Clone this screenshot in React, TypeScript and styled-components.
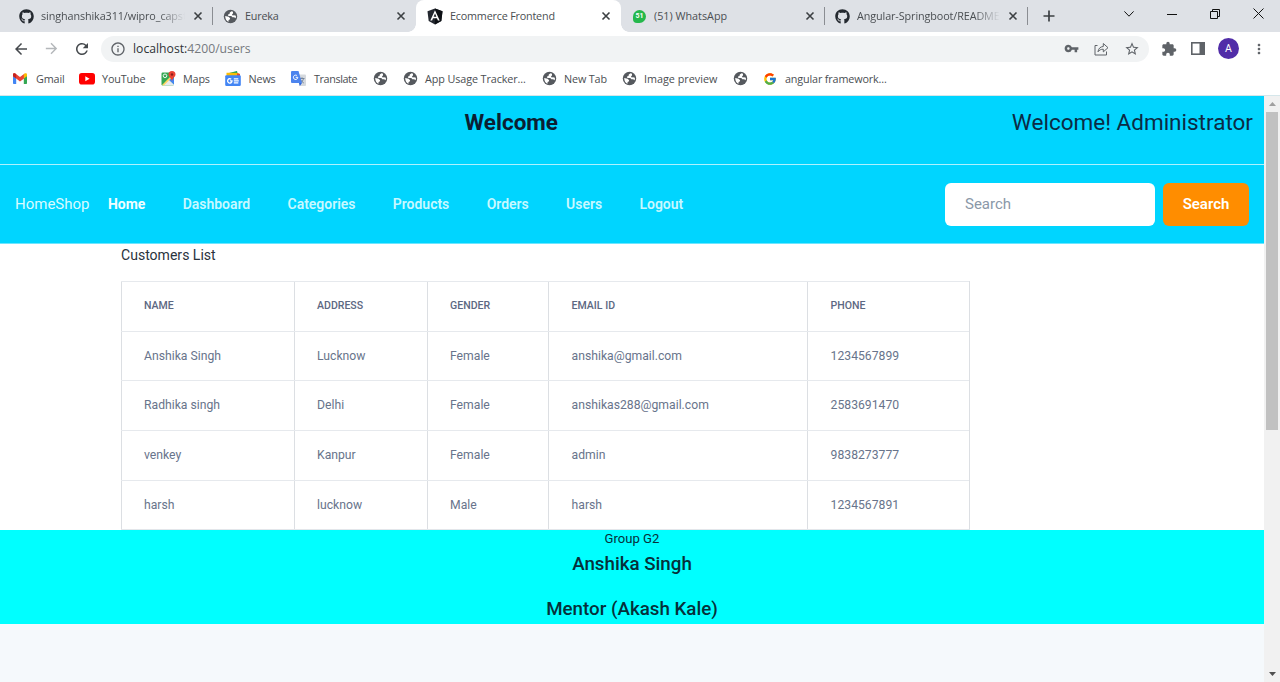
import React from "react";
import styled, { createGlobalStyle } from "styled-components";
import { MdArrowBack, MdArrowForward, MdRefresh, MdInfoOutline, MdVpnKey, MdStarBorder, MdExtension, MdMoreVert } from "react-icons/md";
import { FaGithub } from "react-icons/fa";
import { FcGoogle } from "react-icons/fc";

const Global = createGlobalStyle`
  * { box-sizing: border-box; }
  body { margin: 0; overflow: hidden; font-family: Roboto, sans-serif; }
`;

const Browser = styled.div`
  width: 1280px;
  height: 682px;
  display: flex;
  flex-direction: column;
  background: #fff;
  color: #4a4e52;
  svg { display: block; flex: none; }
`;

const TabStrip = styled.div`
  height: 32px;
  flex: none;
  display: flex;
  background: #dee1e6;
  font: 10.8px/16px "Open Sans", sans-serif;
  letter-spacing: -0.2px;
`;

const Tab = styled.div<{ $w: number; $pad: number; $active?: boolean; $divider?: boolean }>`
  position: relative;
  width: ${(p) => p.$w}px;
  padding: 0 9px 0 ${(p) => p.$pad}px;
  display: flex;
  align-items: center;
  gap: 7px;
  background: ${(p) => (p.$active ? "#fff" : "transparent")};
  border-radius: 8px 8px 0 0;
  ${(p) =>
    p.$active &&
    `&::before, &::after {
      content: ""; position: absolute; bottom: 0; width: 8px; height: 8px;
    }
    &::before { left: -8px; background: radial-gradient(circle at 0 0, transparent 7.5px, #fff 8px); }
    &::after { right: -8px; background: radial-gradient(circle at 100% 0, transparent 7.5px, #fff 8px); }`}
  ${(p) =>
    p.$divider &&
    `&::after {
      content: ""; position: absolute; right: 0; top: 7px; width: 1px; height: 18px; background: #8a8d92;
    }`}
`;

const TabTitle = styled.span<{ $fade?: boolean; $ls?: number }>`
  flex: 1;
  min-width: 0;
  overflow: hidden;
  white-space: nowrap;
  letter-spacing: ${(p) => p.$ls ?? -0.2}px;
  ${(p) => p.$fade && `mask-image: linear-gradient(to right, #000 82%, transparent);`}
`;

const NewTab = styled.div`
  width: 42px;
  display: flex;
  align-items: center;
  justify-content: center;
`;

const WindowButtons = styled.div`
  flex: 1;
  height: 27px;
  display: flex;
  align-items: center;
  justify-content: flex-end;
  gap: 33px;
  padding-right: 16px;
  color: #111;
`;

const Toolbar = styled.div`
  height: 33px;
  flex: none;
  display: flex;
  align-items: center;
  padding: 0 12px 0 12px;
  color: #5f6368;
`;

const NavButtons = styled.div`
  width: 89px;
  display: flex;
  align-items: center;
  gap: 13px;
`;

const Omnibox = styled.div`
  width: 1048px;
  height: 26px;
  padding: 0 9px;
  border-radius: 13px;
  background: #f1f3f4;
  display: flex;
  align-items: center;
`;

const Url = styled.span`
  flex: 1;
  padding: 1px 0 0 7px;
  font: 12.2px/18px "Open Sans", sans-serif;
  color: #75797e;
  b { font-weight: 400; color: #303337; }
`;

const OmniActions = styled.div`
  display: flex;
  align-items: center;
  gap: 15px;
`;

const ToolbarActions = styled.div`
  flex: 1;
  display: flex;
  align-items: center;
  gap: 14px;
  padding-left: 12px;
`;

const Avatar = styled.div`
  width: 21px;
  height: 21px;
  margin: 0 -2px 0 -1px;
  border-radius: 50%;
  background: #512da8;
  color: #fff;
  font-size: 10.5px;
  line-height: 21px;
  text-align: center;
`;

const Bookmarks = styled.div`
  height: 31px;
  flex: none;
  padding: 0 0 3px 13px;
  display: flex;
  align-items: center;
  border-bottom: 1px solid #d5e6ea;
  font: 10.8px/16px "Open Sans", sans-serif;
`;

const Bookmark = styled.div<{ $w: number; $ls?: number; $gap?: number }>`
  width: ${(p) => p.$w}px;
  display: flex;
  align-items: center;
  gap: ${(p) => p.$gap ?? 8}px;
  white-space: nowrap;
  letter-spacing: ${(p) => p.$ls ?? -0.15}px;
`;

const Viewport = styled.div`
  flex: 1;
  display: flex;
  min-height: 0;
`;

const Page = styled.main`
  width: 1264px;
  background: #f5f9fc;
  display: flex;
  flex-direction: column;
`;

const Header = styled.header`
  height: 69px;
  flex: none;
  display: grid;
  grid-template-columns: 1fr 1fr;
  background: #00d5ff;
  border-bottom: 1px solid #aef1ff;
`;

const Welcome = styled.h1`
  margin: 0;
  font: 700 22.5px/26px Roboto, sans-serif;
  text-align: right;
  padding: 13px 74px 0 0;
  color: #0b1f33;
`;

const Greeting = styled.div`
  font: 400 22.5px/26px Roboto, sans-serif;
  text-align: right;
  padding: 13px 11px 0 0;
  color: #0b2b45;
`;

const NavBar = styled.nav`
  height: 79px;
  flex: none;
  display: flex;
  align-items: center;
  background: #00d5ff;
  border-bottom: 1px solid #6de6ff;
  padding: 0 15px;
`;

const Brand = styled.span`
  width: 93px;
  font-size: 15px;
  line-height: 18px;
  color: #d9fbff;
`;

const Links = styled.div`
  flex: 1;
  display: flex;
  gap: 37.4px;
  font: 500 13.95px/18px Roboto, sans-serif;
`;

const NavLink = styled.a<{ $active?: boolean }>`
  font-weight: ${(p) => (p.$active ? 700 : 600)};
  color: ${(p) => (p.$active ? "#f2feff" : "#c8f8ff")};
`;

const SearchForm = styled.div`
  display: flex;
  gap: 8px;
`;

const SearchInput = styled.div`
  width: 210px;
  height: 43px;
  border-radius: 6px;
  background: #fff;
  padding-left: 20px;
  font-size: 15px;
  line-height: 42px;
  color: #8a98a8;
`;

const SearchButton = styled.div`
  width: 86px;
  height: 43px;
  border-radius: 6px;
  background: #ff8d00;
  color: #fff;
  font: 600 15px/42px Roboto, sans-serif;
  text-align: center;
`;

const Content = styled.section`
  height: 286px;
  flex: none;
  background: #fff;
  padding-left: 121px;
`;

const ListTitle = styled.h2`
  margin: 0;
  height: 37px;
  font: 400 14.05px/22px Roboto, sans-serif;
  color: #2a333d;
`;

const Table = styled.div`
  width: 849px;
  border-right: 1px solid #dcdfe3;
  border-bottom: 1px solid #e3e6ea;
`;

const Row = styled.div<{ $h: number }>`
  height: ${(p) => p.$h}px;
  display: grid;
  grid-template-columns: 173px 133px 121px 259px 162px;
  border-top: 1px solid #e6e9ed;
`;

const Cell = styled.div<{ $head?: boolean }>`
  border-left: 1px solid #dcdfe3;
  padding-left: 22px;
  line-height: 48px;
  font-size: ${(p) => (p.$head ? 10.55 : 12.2)}px;
  font-weight: ${(p) => (p.$head ? 500 : 400)};
  color: ${(p) => (p.$head ? "#5c6882" : "#68748b")};
  &:nth-child(n + 4) { padding-left: 22.6px; }
`;

const Footer = styled.footer`
  height: 94px;
  flex: none;
  background: #00ffff;
  text-align: center;
  color: #06303a;
`;

const Group = styled.div`
  font-size: 13.1px;
  line-height: 18px;
`;

const Credit = styled.div<{ $mt: number }>`
  margin-top: ${(p) => p.$mt}px;
  font: 500 18.75px/22px Roboto, sans-serif;
`;

const Scrollbar = styled.div`
  width: 16px;
  background: #f1f1f1;
  display: flex;
  flex-direction: column;
  align-items: center;
`;

const Thumb = styled.div`
  width: 12px;
  height: 318px;
  background: #c1c1c1;
`;

const ArrowBox = styled.div<{ $end?: boolean }>`
  height: 16px;
  display: flex;
  align-items: center;
  ${(p) => p.$end && `margin-top: auto;`}
`;

const Close = () => (
  <svg width="12" height="12" viewBox="0 0 12 12" stroke="#3c4043" strokeWidth="1.6">
    <path d="M2.5 2.5l7 7M9.5 2.5l-7 7" />
  </svg>
);

const AngularIcon = () => (
  <svg width="16" height="17" viewBox="0 0 16 17">
    <path d="M8 .5l7.5 2.7-1.2 9.900L8 16.500l-6.300-3.400L.5 3.200z" fill="#23272f" />
    <path d="M8 .5l7.5 2.700-1.200 9.900L8 16.500z" fill="#0d1015" />
    <path fillRule="evenodd" d="M8 2.200L3.300 12.600h1.800l.95-2.350h3.900l.95 2.350h1.800zM8 5.500l1.350 3.300h-2.700z" fill="#fff" />
  </svg>
);

const Badge = styled.span`
  width: 13px;
  height: 13px;
  margin: 0 1px;
  border-radius: 50% 50% 50% 4px;
  background: #25b84c;
  color: #fff;
  font: 700 7px/13px Roboto, sans-serif;
  text-align: center;
  letter-spacing: 0;
`;

const GmailIcon = () => (
  <svg width="14" height="11" viewBox="0 0 14 11">
    <path d="M0 2v8.200c0 .5.300.8.800.8H3.200V4.500z" fill="#4285f4" />
    <path d="M14 2v8.200c0 .5-.300.8-.800.8H10.800V4.500z" fill="#34a853" />
    <path d="M0 1.500C0 .3 1.300-.2 2.300.5L7 4.100 11.700.5v4.500L7 8.400 3.200 5.600 0 3.200z" fill="#ea4335" />
    <path d="M0 1.500C0 .3 1.300-.2 2.300.5l.9.7v4.400L0 3.200z" fill="#c5221f" />
    <path d="M10.800 1.200l.9-.7C12.700-.2 14 .3 14 1.500v1.700l-3.200 2.400z" fill="#fbbc04" />
  </svg>
);

const YouTubeIcon = () => (
  <svg width="16" height="12" viewBox="0 0 16 12">
    <rect width="16" height="11.5" rx="2.8" fill="#f00" />
    <path d="M6.300 3.300v5l4.300-2.500z" fill="#fff" />
  </svg>
);

const MapsIcon = () => (
  <svg width="15" height="15" viewBox="0 0 15 15">
    <rect x=".5" y="1.5" width="12.5" height="13" rx="1.2" fill="#34a853" />
    <path d="M1.500 14.500L7.500 8l5.500 5.500v1z" fill="#e8eaed" />
    <path d="M7.500 8.500l5.500 5V7z" fill="#4285f4" />
    <path d="M1 14l11-11 1 1.500L2.800 14.500z" fill="#fdd663" />
    <circle cx="4" cy="4.800" r="1.800" fill="none" stroke="#fff" strokeWidth=".9" />
    <path d="M11 0a3.500 3.500 0 0 1 3.500 3.500C14.500 6 11.500 7 11 10.200 10.500 7 7.500 6 7.500 3.500A3.500 3.500 0 0 1 11 0z" fill="#ea4335" />
    <circle cx="11" cy="3.500" r="1.200" fill="#8c1d18" />
  </svg>
);

const NewsIcon = () => (
  <svg width="16" height="15" viewBox="0 0 16 15">
    <path d="M2 2.500L12 0l1 4H2z" fill="#0f9d58" />
    <path d="M1.500 1.800h10l3 .7V6h-13z" fill="#fbbc04" />
    <path d="M12 2.200l3 .8V6h-3z" fill="#ea4335" />
    <rect x=".2" y="4.300" width="15.600" height="10.700" rx="1.200" fill="#4285f4" />
    <path d="M6.200 8.200a2.200 2.200 0 1 0 .8 1.700H5" fill="none" stroke="#fff" strokeWidth="1.300" />
    <path d="M8.800 7.800h4.500M8.800 9.800h5M8.800 11.800h4.500" stroke="#fff" strokeWidth="1.200" />
  </svg>
);

const TranslateIcon = () => (
  <svg width="15" height="15" viewBox="0 0 15 15">
    <path d="M6 3.500h8a1 1 0 0 1 1 1V14a1 1 0 0 1-1 1H8.500z" fill="#d5d9de" />
    <path d="M8.500 7.500h5M11 6.300v1.200M12.600 7.500c-.5 2-1.700 3.300-3 4.200M9.800 9c.6 1.300 1.800 2.400 3 3" fill="none" stroke="#6e7f96" strokeWidth=".9" />
    <path d="M1 0h6.500L11 12H1a1 1 0 0 1-1-1V1a1 1 0 0 1 1-1z" fill="#4c84ee" />
    <path d="M8 12h3l-2.200 3z" fill="#3367d6" />
    <path d="M6.100 4.700a2.200 2.200 0 1 0 .7 1.600H4.700" fill="none" stroke="#fff" strokeWidth="1" />
  </svg>
);

const Globe = () => (
  <svg width="15" height="15" viewBox="0 0 15 15">
    <circle cx="7.5" cy="7.5" r="6.700" fill="#55595e" />
    <path d="M8.600 2.200L6.800 3.600 6.500 5 5 5.600 5.300 7h3l1.100 1.200h1.700l1.500 1c.3-.8.4-1.600.3-2.400l-1.800-.5-1.500.2-.6-1.300L10 4.600V2.700zM2.200 6.900l3.400.8 1.500 1.500-.3 1.300-1.200.6-.1 1.700C3.500 11.800 2.200 9.800 2.200 6.900z" fill="#fff" />
  </svg>
);

const customers = [
  ["Anshika Singh", "Lucknow", "Female", "anshika@gmail.com", "1234567899"],
  ["Radhika singh", "Delhi", "Female", "anshikas288@gmail.com", "2583691470"],
  ["venkey", "Kanpur", "Female", "admin", "9838273777"],
  ["harsh", "lucknow", "Male", "harsh", "1234567891"],
];
const rowHeights = [49, 50, 50, 49];

export default function App() {
  return (
    <Browser>
      <Global />
      <TabStrip>
        <Tab $w={213} $pad={19} $divider>
          <FaGithub size={15} color="#24292f" />
          <TabTitle $fade $ls={-0.1}>singhanshika311/wipro_capst</TabTitle>
          <Close />
        </Tab>
        <Tab $w={203} $pad={10}>
          <Globe />
          <TabTitle>Eureka</TabTitle>
          <Close />
        </Tab>
        <Tab $w={205} $pad={11} $active>
          <AngularIcon />
          <TabTitle>Ecommerce Frontend</TabTitle>
          <Close />
        </Tab>
        <Tab $w={204} $pad={11} $divider>
          <Badge>51</Badge>
          <TabTitle $ls={0}>(51) WhatsApp</TabTitle>
          <Close />
        </Tab>
        <Tab $w={203} $pad={10} $divider>
          <FaGithub size={15} color="#24292f" />
          <TabTitle $fade $ls={-0.1}>Angular-Springboot/README</TabTitle>
          <Close />
        </Tab>
        <NewTab>
          <svg width="12" height="12" viewBox="0 0 12 12" stroke="#3c4043" strokeWidth="1.7">
            <path d="M6 .5v11M.5 6h11" />
          </svg>
        </NewTab>
        <WindowButtons>
          <svg width="10" height="6" viewBox="0 0 10 6" fill="none" stroke="currentColor">
            <path d="M.4.4L5 5.200 9.600.4" />
          </svg>
          <svg width="10" height="10" viewBox="0 0 10 10" stroke="currentColor">
            <path d="M0 5.500h10" />
          </svg>
          <svg width="10" height="10" viewBox="0 0 10 10" fill="none" stroke="currentColor">
            <path d="M.5 2.500h7v7h-7zM2.500 2.500v-2h7v7h-2" />
          </svg>
          <svg width="11" height="11" viewBox="0 0 11 11" stroke="currentColor">
            <path d="M.5.5l10 10M10.500.5l-10 10" />
          </svg>
        </WindowButtons>
      </TabStrip>
      <Toolbar>
        <NavButtons>
          <MdArrowBack size={18} color="#45494d" />
          <MdArrowForward size={17} color="#b4b7ba" />
          <MdRefresh size={18} color="#45494d" />
        </NavButtons>
        <Omnibox>
          <MdInfoOutline size={16} />
          <Url><b>localhost:</b>4200/users</Url>
          <OmniActions>
            <MdVpnKey size={15} />
            <svg width="15" height="14" viewBox="0 0 15 14" fill="none" stroke="currentColor" strokeWidth="1">
              <path d="M3.500 3.500H1v9.500h11.500V9.500M4 9.800C4.400 6.500 6.300 4.700 9.300 4.500V1.500l4.700 4.200-4.700 4.200V7.200C7 7.200 5.300 8 4 9.800z" />
            </svg>
            <MdStarBorder size={16} />
          </OmniActions>
        </Omnibox>
        <ToolbarActions>
          <MdExtension size={16} />
          <svg width="14" height="13" viewBox="0 0 14 13">
            <rect x=".8" y=".8" width="12.400" height="11.400" fill="none" stroke="currentColor" strokeWidth="1.600" />
            <rect x="8.500" y="0" width="5.500" height="13" fill="currentColor" />
          </svg>
          <Avatar>A</Avatar>
          <MdMoreVert size={16} />
        </ToolbarActions>
      </Toolbar>
      <Bookmarks>
        <Bookmark $w={66} $gap={9}><GmailIcon />Gmail</Bookmark>
        <Bookmark $w={82} $gap={7}><YouTubeIcon />YouTube</Bookmark>
        <Bookmark $w={64} $gap={7}><MapsIcon />Maps</Bookmark>
        <Bookmark $w={66} $gap={7.5}><NewsIcon />News</Bookmark>
        <Bookmark $w={82} $ls={-0.4}><TranslateIcon />Translate</Bookmark>
        <Bookmark $w={30}><Globe /></Bookmark>
        <Bookmark $w={139} $gap={7} $ls={-0.1}><Globe />App Usage Tracker...</Bookmark>
        <Bookmark $w={80} $gap={7}><Globe />New Tab</Bookmark>
        <Bookmark $w={111} $gap={7} $ls={0}><Globe />Image preview</Bookmark>
        <Bookmark $w={30}><Globe /></Bookmark>
        <Bookmark $w={130}><FcGoogle size={14} />angular framework...</Bookmark>
      </Bookmarks>
      <Viewport>
        <Page>
          <Header>
            <Welcome>Welcome</Welcome>
            <Greeting>Welcome! Administrator</Greeting>
          </Header>
          <NavBar>
            <Brand>HomeShop</Brand>
            <Links>
              <NavLink $active>Home</NavLink>
              <NavLink>Dashboard</NavLink>
              <NavLink>Categories</NavLink>
              <NavLink>Products</NavLink>
              <NavLink>Orders</NavLink>
              <NavLink>Users</NavLink>
              <NavLink>Logout</NavLink>
            </Links>
            <SearchForm>
              <SearchInput>Search</SearchInput>
              <SearchButton>Search</SearchButton>
            </SearchForm>
          </NavBar>
          <Content>
            <ListTitle>Customers List</ListTitle>
            <Table>
              <Row $h={50}>
                {["NAME", "ADDRESS", "GENDER", "EMAIL ID", "PHONE"].map((h) => (
                  <Cell $head key={h}>{h}</Cell>
                ))}
              </Row>
              {customers.map((c, i) => (
                <Row $h={rowHeights[i]} key={c[0]}>
                  {c.map((v, j) => <Cell key={j}>{v}</Cell>)}
                </Row>
              ))}
            </Table>
          </Content>
          <Footer>
            <Group>Group G2</Group>
            <Credit $mt={5}>Anshika Singh</Credit>
            <Credit $mt={23}>Mentor (Akash Kale)</Credit>
          </Footer>
        </Page>
        <Scrollbar>
          <ArrowBox><svg width="7" height="4" viewBox="0 0 7 4"><path d="M0 4L3.500 0 7 4z" fill="#a0a0a0" /></svg></ArrowBox>
          <Thumb />
          <ArrowBox $end><svg width="7" height="4" viewBox="0 0 7 4"><path d="M0 0l3.500 4L7 0z" fill="#505050" /></svg></ArrowBox>
        </Scrollbar>
      </Viewport>
    </Browser>
  );
}
